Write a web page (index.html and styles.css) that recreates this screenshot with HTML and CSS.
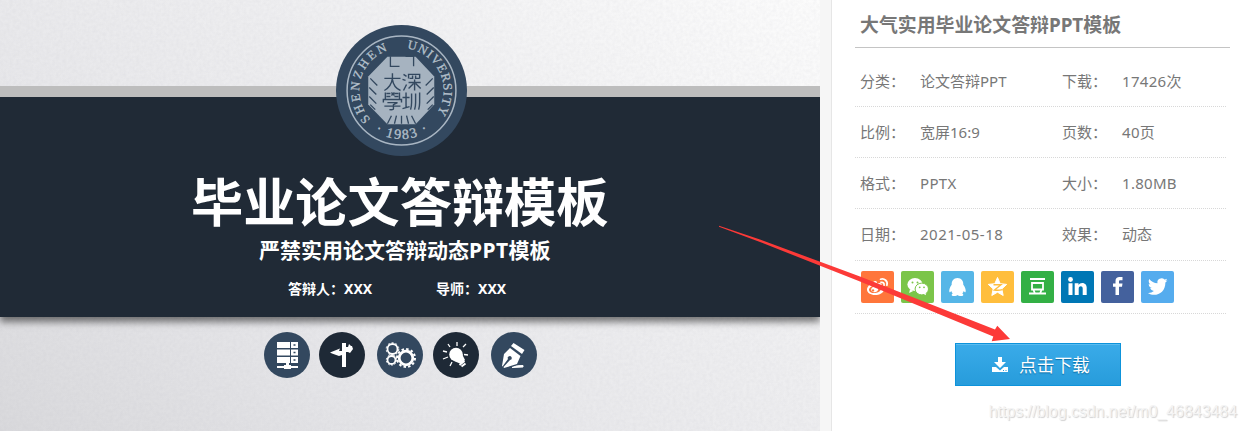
FILE: index.html
```html
<!DOCTYPE html>
<html lang="zh-CN">
<head>
<meta charset="utf-8">
<title>大气实用毕业论文答辩PPT模板</title>
<link rel="stylesheet" href="styles.css">
</head>
<body>
<main class="page">
  <section class="slide">
    <svg class="grain" width="820" height="431" aria-hidden="true">
      <filter id="grain"><feTurbulence type="fractalNoise" baseFrequency="0.3" numOctaves="2" seed="4"/><feColorMatrix values="0 0 0 0 .45  0 0 0 0 .45  0 0 0 0 .5  .5 0 0 0 -.14"/></filter>
      <rect width="820" height="431" filter="url(#grain)"/>
    </svg>
    <div class="banner">
      <h1 class="slide-title">毕业论文答辩模板</h1>
      <p class="slide-sub">严禁实用论文答辩动态<span class="sub-latin">PPT</span>模板</p>
      <p class="slide-people"><span>答辩人：XXX</span><span>导师：XXX</span></p>
    </div>
    <svg class="emblem" viewBox="0 0 130 130">
      <defs>
        <path id="arc-left" d="M34.300 93.600A42 42 0 0 1 57 23.800"/>
        <path id="arc-right" d="M70.500 23.400A42 42 0 0 1 97 92"/>
        <path id="year" d="M20.500 84A48.500 48.500 0 0 0 109.500 84"/>
      </defs>
      <circle cx="65" cy="65" r="65" fill="#33485f"/>
      <circle cx="65" cy="65" r="54" fill="none" stroke="#a9b6c3" stroke-width="1.500"/>
      <path d="M51 31.500H79L97.500 51V79L79 98.500H51L32 79V51Z" fill="#a6b3c0"/>
      <path d="M54 31v10h9M69 31h8v10M34 53l7 7M33 62l7 7M33 71l7 7M39 84l-5-5M96 53l-7 7M97 62l-7 7M97 71l-7 7M91 84l5-5M51 98l4-8M58 98l2-8M65 98v-8M72 98l-2-8M79 98l-4-8" stroke="#33485f" stroke-width="1.300" fill="none"/>
      <g stroke="#33485f" stroke-width="1.400" fill="none">
        <path d="M48 53h16M56 48v5q-1 8-8 12M56 54q1 8 8 11"/>
        <path d="M49 67v7M63 67v7M50 68h4M50 71h4M58 68h4M58 71h4M55 67l3 3M58 67l-3 3M47 77v-3h18v3M51 77h10l-4 2v4q0 1.500-4 1M48 80.500h16"/>
        <path d="M67 49l3 2M66 54l3 1M67 65l3-6M72 53v-4h11v4M76 50v3h-3M79 50v3h4M72 57h12M78 54v11M77 58l-5 5M79 58l5 5"/>
        <path d="M66 72h7M69.500 67v15M66 83l7-2M75 68v9q0 4-1 7M79 68v9q0 4-1 7M83 67v10q0 4-1 7"/>
      </g>
      <text class="seal" fill="#b4c0cb"><textPath href="#arc-left" textLength="83">SHENZHEN</textPath></text>
      <text class="seal" fill="#b4c0cb"><textPath href="#arc-right" textLength="84">UNIVERSITY</textPath></text>
      <text class="seal-year" fill="#b4c0cb"><textPath href="#year" startOffset="50%" text-anchor="middle" textLength="56">· 1983 ·</textPath></text>
    </svg>
    <div class="badges">
      <svg class="badge" viewBox="0 0 46 46"><circle cx="23" cy="23" r="23" fill="#33485f"/><path fill="#fff" d="M13 10h13v6H13zM13 17.5h13v6H13zM13 25h13v6H13zM27 10h7v6h-7zM27 17.500h7v6h-7zM27 25h7v6h-7zM22 31h3v2h2v1h7v2H27v1h-7v-1h-7v-2h7v-1h2z"/><path fill="#33485f" d="M29.500 12.200h2v1.600h-2zM29.500 19.700h2v1.600h-2zM29.500 27.200h2v1.600h-2z"/></svg>
      <svg class="badge badge-2" viewBox="0 0 46 46"><circle cx="23" cy="23" r="23" fill="#1e2936"/><path fill="#fff" d="M23 11h4v4h2l1-3 2 2h1l1 3-3 4-2-1-2 0v15h-4V23l-3 1-7-2.500-2-1 10-4-1 2.500h3z"/></svg>
      <svg class="badge badge-3" viewBox="0 0 46 46"><circle cx="23" cy="23" r="23" fill="#33485f"/><g fill="none" stroke="#fff"><circle cx="15.500" cy="17" r="5" stroke-width="1.800"/><circle cx="15.500" cy="17" r="6.300" stroke-dasharray="2 2"/><circle cx="14.500" cy="28" r="4" stroke-width="1.800"/><circle cx="14.500" cy="28" r="5.200" stroke-dasharray="1.600 1.700"/><circle cx="29" cy="26" r="6.800" stroke-width="2.800"/><circle cx="29" cy="26" r="9" stroke-width="2" stroke-dasharray="2.500 2.200"/></g></svg>
      <svg class="badge badge-4" viewBox="0 0 46 46"><circle cx="23" cy="23" r="23" fill="#1e2936"/><circle cx="23" cy="22.500" r="6.800" fill="#fff"/><path d="M21 29l8-7 3 6-4 4z" fill="#fff"/><path d="M26.500 33l5-4M28.500 34.500l4-3" stroke="#fff" stroke-width="2"/><path d="M24 10v4M33 12l-3 3M35 23l-4-.5M15 12l2 3M10 19l4 1M10 27l5-2M17 34l2-4" stroke="#fff" stroke-width="1.300"/></svg>
      <svg class="badge badge-5" viewBox="0 0 46 46"><circle cx="23" cy="23" r="23" fill="#33485f"/><path d="M22.500 11l11 7-2.500 4-11-8zM19 16l10.500 8-3.500 8-13 4-.5-1 6.500-7a2 2 0 1 0-2-1l-5.500 7.500-.5-.5 2-12z" fill="#fff"/><path d="M21 35.500q5-2.500 11-2v1.500z" fill="#fff" stroke="#fff"/></svg>
    </div>
  </section>

  <aside class="info">
    <h2 class="info-title">大气实用毕业论文答辩PPT模板</h2>
    <dl class="specs">
      <div class="spec-row"><dt>分类：</dt><dd>论文答辩PPT</dd><dt>下载：</dt><dd><span class="num">17426</span>次</dd></div>
      <div class="spec-row"><dt>比例：</dt><dd>宽屏16:9</dd><dt>页数：</dt><dd><span class="num">40</span>页</dd></div>
      <div class="spec-row"><dt>格式：</dt><dd><span class="num">PPTX</span></dd><dt>大小：</dt><dd><span class="num">1.80MB</span></dd></div>
      <div class="spec-row spec-last"><dt>日期：</dt><dd><span class="date">2021-05-18</span></dd><dt>效果：</dt><dd>动态</dd></div>
    </dl>
    <div class="share">
      <svg class="share-icon weibo" viewBox="0 0 33 32"><path fill="#fff" fill-rule="evenodd" d="M13 10.500c2-1 3.500 0 2.800 2.200 3-1.200 5.400-.7 4.700 2 2 .6 3 1.700 2.700 3.500C22.700 22 18.500 24 14 24S6 21.700 6 18.500c0-3 4-7 7-8zM14 14.500c-3.600.4-6 2.300-6 4.400s2.700 3.400 6.200 3.100c3.500-.4 6-2.400 5.800-4.500-.2-2-2.800-3.300-6-3zM13.500 15.500c2.200-.3 4 .9 3.700 2.700-.2 1.700-1.900 3-4 3-2 0-3.300-1.200-3-2.900.2-1.400 1.600-2.600 3.300-2.800zM12 18.200a1.200 1.200 0 1 0 .1 0z"/><path d="M19.500 8.200c4-1.200 7.600 2 6.400 6M20 11.400c2-.5 3.600 1 3 3" stroke="#fff" stroke-width="1.700" stroke-linecap="round" fill="none"/></svg>
      <svg class="share-icon wechat" viewBox="0 0 33 32"><ellipse cx="14" cy="13.500" rx="7.600" ry="6.400" fill="#fff"/><path d="M9 18l-.8 4 4-2z" fill="#fff"/><ellipse cx="20.800" cy="18" rx="6.700" ry="5.900" fill="#fff" stroke="#7bc549"/><path d="M22 22.500l3 1.700-.5-3z" fill="#fff"/><g fill="#7bc549"><circle cx="11.500" cy="11.500" r="1"/><circle cx="16.500" cy="11.500" r="1"/><circle cx="18.700" cy="16.300" r=".9"/><circle cx="23" cy="16.300" r=".9"/></g></svg>
      <svg class="share-icon qq" viewBox="0 0 33 32"><path fill="#fff" d="M16.500 7c4 0 6 3 5.800 6.700 1.400 1.700 3 5 2.300 7.200-.5.700-1.300-.2-1.900-1-.2 1-.7 1.800-1.400 2.500 2.200 1.600.3 2.600-1.500 2.600-1.500 0-2.500-.4-3.300-1-.8.600-1.800 1-3.300 1-1.800 0-3.700-1-1.500-2.600-.7-.7-1.200-1.500-1.400-2.500-.6.800-1.400 1.700-1.900 1-.7-2.200.9-5.500 2.300-7.200C10.500 10 12.500 7 16.500 7z"/></svg>
      <svg class="share-icon qzone" viewBox="0 0 33 32"><path fill="#fff" stroke="#fff" stroke-linejoin="round" d="M16.500 6.500l2.700 6.200 6.500.7-4.900 4.500 1.400 6.600-5.700-3.300-5.700 3.300 1.400-6.600-4.900-4.500 6.500-.7z"/><path d="M12.500 13.800h7.500l-6.500 5.200q4 .6 8-.4" fill="none" stroke="#ffbe3d" stroke-width="1.400"/></svg>
      <svg class="share-icon douban" viewBox="0 0 33 32"><path d="M9 8h15M8 22.500h17M11 12h11v6.500H11zM12.500 19l1.500 3.500M20.500 19L19 22.500" fill="none" stroke="#fff" stroke-width="1.800"/></svg>
      <svg class="share-icon linkedin" viewBox="0 0 33 32"><g fill="#fff"><circle cx="9.500" cy="8.500" r="2.400"/><path d="M7.500 12.300h4V24h-4zM13.700 12.300h3.800V14c1.700-3.300 8.200-2.700 8.200 2.500V24h-4v-6.500c0-3.200-4-2.800-4 0V24h-4z"/></g></svg>
      <svg class="share-icon facebook" viewBox="0 0 33 32"><path fill="#fff" d="M14.500 24v-8.300H12v-3.200h2.500V10c0-3 1.600-4 4-4H21.500v3.300h-2c-1.100 0-1.500.4-1.500 1.400v1.800h3.500l-.5 3.200H18V24z"/></svg>
      <svg class="share-icon twitter" viewBox="0 0 33 32"><path fill="#fff" d="M26.500 9.200c-.8.300-1.400.5-2.100.6.800-.5 1.300-1.200 1.600-2.100-.8.400-1.600.8-2.500.9a4.100 4.100 0 0 0-7 3.700c-3.300-.2-6.300-1.800-8.200-4.300-1.200 2.100-.5 4.300 1.200 5.400-.7 0-1.300-.2-1.800-.5 0 2 1.400 3.700 3.200 4.100-.6.200-1.200.2-1.800.1.500 1.600 2 2.700 3.800 2.800A8 8 0 0 1 6.800 22c7.500 4.700 17.700.3 17.600-10.500.8-.6 1.500-1.400 2.100-2.300z"/></svg>
    </div>
    <div class="download-wrap">
      <a class="download"><svg class="download-icon" viewBox="0 0 18 18"><path fill="#fff" d="M7 1h4v5h4l-6 6-6-6h4zM1 11h4l4 3.500L13 11h4v5H1z"/><path d="M12 14.500h1M14.500 14.500h1" stroke="#2a9bdb"/></svg>点击下载</a>
    </div>
  </aside>
  <svg class="arrow" viewBox="0 0 1246 431"><path d="M719 225.700L760 239.500L860 276.500L995 329.500L997.300 325.700L1010 339L991.700 341.300L993.300 336.500L860 281.500L760 242L719 226.700Z" fill="#fc3a38"/></svg>
  <div class="watermark">https://blog.csdn.net/m0_46843484</div>
</main>
</body>
</html>
```
FILE: styles.css
```css
* { box-sizing: border-box; }
body, h1, h2, p, dl, dt, dd { margin: 0; }
body {
  background: #fff;
  color: #777;
  font-family: "Noto Sans", "Noto Sans CJK SC", sans-serif;
}
.page {
  position: relative;
  display: flex;
  width: 1246px;
  height: 431px;
  overflow: hidden;
  background: #f6f6f6;
}
.slide {
  position: relative;
  width: 820px;
  height: 431px;
  padding-top: 86px;
  overflow: hidden;
  background: linear-gradient(35deg, #d9d9dc 0%, #e6e6e9 30%, #eeeef0 60%, #fcfcfc 100%);
}
.grain { position: absolute; left: 0; top: 0; opacity: .35; }
.banner {
  position: relative;
  height: 231px;
  padding-top: 73px;
  border-top: 11px solid #bdbdbd;
  background: #202a36;
  box-shadow: 0 5px 7px rgba(0, 0, 0, .5);
  clip-path: inset(0 0 -20px 0);
  color: #fff;
  font-weight: 700;
}
.slide-title {
  height: 63px;
  padding-left: 191px;
  font: 700 52.200px/58px "Noto Sans CJK SC", sans-serif;
  white-space: nowrap;
}
.slide-sub {
  height: 43px;
  padding-left: 259px;
  font-size: 21px;
  line-height: 34px;
  white-space: nowrap;
}
.sub-latin { letter-spacing: .4px; }
.slide-people {
  display: flex;
  padding-left: 288px;
  font-size: 14px;
  line-height: 26px;
}
.slide-people span { width: 148px; white-space: nowrap; }
.emblem { position: absolute; left: 336px; top: 25px; width: 131px; height: 131px; }
.seal { font: 400 12.500px "Liberation Serif", serif; stroke: #b4c0cb; stroke-width: .3px; }
.seal-year { font: 400 14px "Liberation Serif", serif; stroke: #b4c0cb; stroke-width: .3px; }
.badges { position: relative; display: flex; padding: 15px 0 0 264px; }
.badge { width: 46px; height: 46px; flex: none; }
.badge-2 { margin-left: 9px; }
.badge-3 { margin-left: 12px; }
.badge-4 { margin-left: 10px; }
.badge-5 { margin-left: 12px; }
.info {
  width: 415px;
  margin-left: 11px;
  padding-left: 23px;
  border-left: 1px solid #e6e6e6;
  background: #fff;
}
.info-title {
  width: 375px;
  height: 48px;
  padding: 4px 0 0 5px;
  border-bottom: 1px solid #c4c4c4;
  font-size: 18.900px;
  font-weight: 700;
  line-height: 43px;
  white-space: nowrap;
}
.specs { padding-top: 8px; font-size: 15px; }
.spec-row {
  display: grid;
  grid-template-columns: 60px 142px 60px 1fr;
  width: 371px;
  height: 51px;
  padding-left: 5px;
  border-bottom: 1px dotted #d8d8d8;
  line-height: 50px;
  white-space: nowrap;
}
.spec-last { height: 52px; }
.num { letter-spacing: .3px; }
.date { letter-spacing: .5px; }
.share {
  display: flex;
  gap: 7px;
  width: 371px;
  height: 53px;
  padding: 10px 0 0 6px;
  border-bottom: 1px dotted #d8d8d8;
}
.share-icon { width: 33px; height: 32px; flex: none; border-radius: 2px; }
.weibo { background: #ff763b; }
.wechat { background: #7bc549; }
.qq { background: #56b6e7; }
.qzone { background: #ffbe3d; }
.douban { background: #33b045; }
.linkedin { background: #0077b5; }
.facebook { background: #44619d; }
.twitter { background: #55acee; }
.download-wrap { padding: 29px 0 0 100px; }
.download {
  display: flex;
  align-items: center;
  gap: 10px;
  width: 166px;
  height: 43px;
  padding-left: 35px;
  border: 1px solid #0d93db;
  background: linear-gradient(#3aabe9, #279cdb);
  box-shadow: inset 0 1px 0 #5bbcf0;
  color: #fff;
  font-size: 17.700px;
  line-height: 38px;
  text-shadow: 0 1px 1px #0b6ca5;
}
.download-icon { width: 18px; height: 18px; }
.arrow { position: absolute; left: 0; top: 0; width: 1246px; height: 431px; }
.watermark {
  position: absolute;
  right: 9px;
  top: 402px;
  color: #f4f4f4;
  font: 15.900px/20px "Liberation Sans", sans-serif;
  text-shadow: 1px 1px 1px #d0d0d0;
  white-space: nowrap;
}
```
